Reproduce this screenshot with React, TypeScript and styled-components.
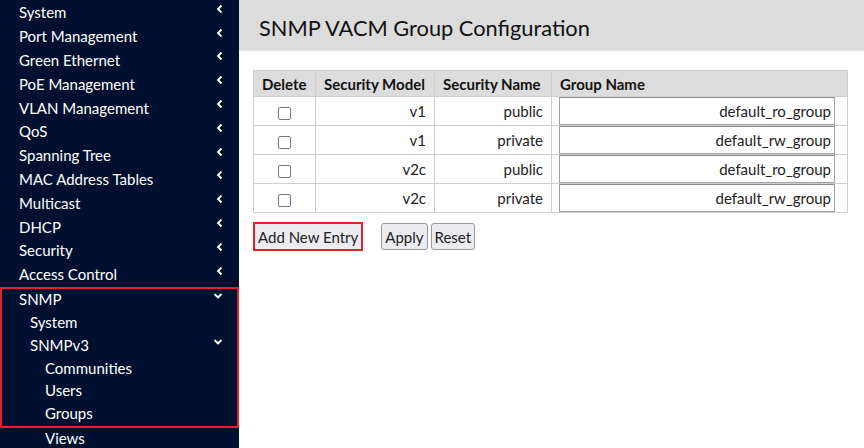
import React from "react";
import styled, { createGlobalStyle } from "styled-components";

const Global = createGlobalStyle`
  html, body { margin: 0; padding: 0; }
  body { font-family: Lato, "Noto Sans", sans-serif; background: #fff; overflow: hidden; }
  * { box-sizing: border-box; }
`;

const Page = styled.div`
  display: flex;
  width: 864px;
  height: 448px;
  overflow: hidden;
`;

const Sidebar = styled.nav`
  width: 239px;
  flex: none;
  background: #011030;
  color: #fff;
  display: flex;
  flex-direction: column;
  padding-top: 1px;
`;

const Item = styled.div<{ $level: number; $h: number }>`
  flex: none;
  height: ${(p) => p.$h}px;
  display: flex;
  align-items: center;
  justify-content: space-between;
  padding-left: ${(p) => (p.$level === 0 ? 19 : p.$level === 1 ? 30 : 45)}px;
  padding-right: 14px;
  font-size: 15px;
  line-height: 1;
`;

const Highlight = styled.div`
  flex: none;
  border: 2px solid #e8202a;
  display: flex;
  flex-direction: column;
  padding-bottom: 1px;
  & > div { margin-left: -2px; }
`;

const Chevron = ({ down }: { down?: boolean }) => (
  <svg width="10" height="10" viewBox="0 0 10 10" style={{ marginTop: -8 }}>
    {down ? (
      <path d="M1.5 3 L5 6.5 L8.5 3" fill="none" stroke="#fff" strokeWidth="1.8" />
    ) : (
      <path d="M6.5 1.5 L3 5 L6.5 8.5" fill="none" stroke="#fff" strokeWidth="1.8" />
    )}
  </svg>
);

const Main = styled.main`
  flex: 1;
  display: flex;
  flex-direction: column;
`;

const Header = styled.header`
  height: 50px;
  background: #dcdcdc;
  box-shadow: 0 1px 2px rgba(0, 0, 0, 0.12);
  display: flex;
  align-items: center;
  padding-left: 20px;
  padding-top: 5px;
  font-size: 21.8px;
  color: #111;
`;

const Content = styled.div`
  padding: 20px 0 0 14px;
`;

const Table = styled.table`
  border-collapse: collapse;
  table-layout: fixed;
  width: 594px;
  font-size: 15px;
  color: #222;
  & th, & td { border: 1px solid #cfcfcf; }
`;

const Th = styled.th<{ $w: number }>`
  width: ${(p) => p.$w}px;
  background: #dcdcdc;
  height: 26px;
  font-weight: bold;
  text-align: left;
  padding: 0 8px;
  white-space: nowrap;
  color: #111;
`;

const Td = styled.td<{ $align?: string }>`
  height: 29px;
  padding: 0 8px;
  text-align: ${(p) => p.$align || "right"};
`;

const InputCell = styled.td`
  padding: 0 12px 0 7px;
  height: 29px;
`;

const Check = styled.span`
  display: inline-block;
  width: 13px;
  height: 13px;
  border: 1.5px solid #767690;
  border-radius: 2px;
  vertical-align: middle;
  background: #fff;
`;

const TextBox = styled.div`
  height: 28px;
  border: 1px solid #a0a0a8;
  border-top-color: #8a8a8a;
  display: flex;
  align-items: center;
  justify-content: flex-end;
  padding-right: 3px;
  color: #222;
  font-size: 15px;
`;

const Buttons = styled.div`
  display: flex;
  align-items: center;
  margin-top: 9px;
  gap: 3px;
`;

const Button = styled.button<{ $outlined?: boolean }>`
  font-family: inherit;
  font-size: 15px;
  color: #222;
  height: ${(p) => (p.$outlined ? 29 : 27)}px;
  padding: 0 3px;
  background: #ececf0;
  border: ${(p) => (p.$outlined ? "2px solid #e8202a" : "1px solid #999")};
  border-radius: ${(p) => (p.$outlined ? 0 : 3)}px;
  margin-right: ${(p) => (p.$outlined ? 15 : 0)}px;
`;

const top = [
  "System",
  "Port Management",
  "Green Ethernet",
  "PoE Management",
  "VLAN Management",
  "QoS",
  "Spanning Tree",
  "MAC Address Tables",
  "Multicast",
  "DHCP",
  "Security",
  "Access Control",
];

const rows = [
  ["v1", "public", "default_ro_group"],
  ["v1", "private", "default_rw_group"],
  ["v2c", "public", "default_ro_group"],
  ["v2c", "private", "default_rw_group"],
];

export default function App() {
  return (
    <Page>
      <Global />
      <Sidebar>
        {top.map((t) => (
          <Item key={t} $level={0} $h={23.8}>
            <span>{t}</span>
            <Chevron />
          </Item>
        ))}
        <Highlight>
          <Item $level={0} $h={22.5}>
            <span>SNMP</span>
            <Chevron down />
          </Item>
          <Item $level={1} $h={23}>
            <span>System</span>
          </Item>
          <Item $level={1} $h={23}>
            <span>SNMPv3</span>
            <Chevron down />
          </Item>
          <Item $level={2} $h={22.5}>
            <span>Communities</span>
          </Item>
          <Item $level={2} $h={22.5}>
            <span>Users</span>
          </Item>
          <Item $level={2} $h={22.5}>
            <span>Groups</span>
          </Item>
        </Highlight>
        <Item $level={2} $h={22.5}>
          <span>Views</span>
        </Item>
      </Sidebar>
      <Main>
        <Header>SNMP VACM Group Configuration</Header>
        <Content>
          <Table>
            <thead>
              <tr>
                <Th $w={62}>Delete</Th>
                <Th $w={119}>Security Model</Th>
                <Th $w={117}>Security Name</Th>
                <Th $w={296}>Group Name</Th>
              </tr>
            </thead>
            <tbody>
              {rows.map((r, i) => (
                <tr key={i}>
                  <Td $align="center">
                    <Check />
                  </Td>
                  <Td>{r[0]}</Td>
                  <Td>{r[1]}</Td>
                  <InputCell>
                    <TextBox>{r[2]}</TextBox>
                  </InputCell>
                </tr>
              ))}
            </tbody>
          </Table>
          <Buttons>
            <Button $outlined>Add New Entry</Button>
            <Button>Apply</Button>
            <Button>Reset</Button>
          </Buttons>
        </Content>
      </Main>
    </Page>
  );
}
